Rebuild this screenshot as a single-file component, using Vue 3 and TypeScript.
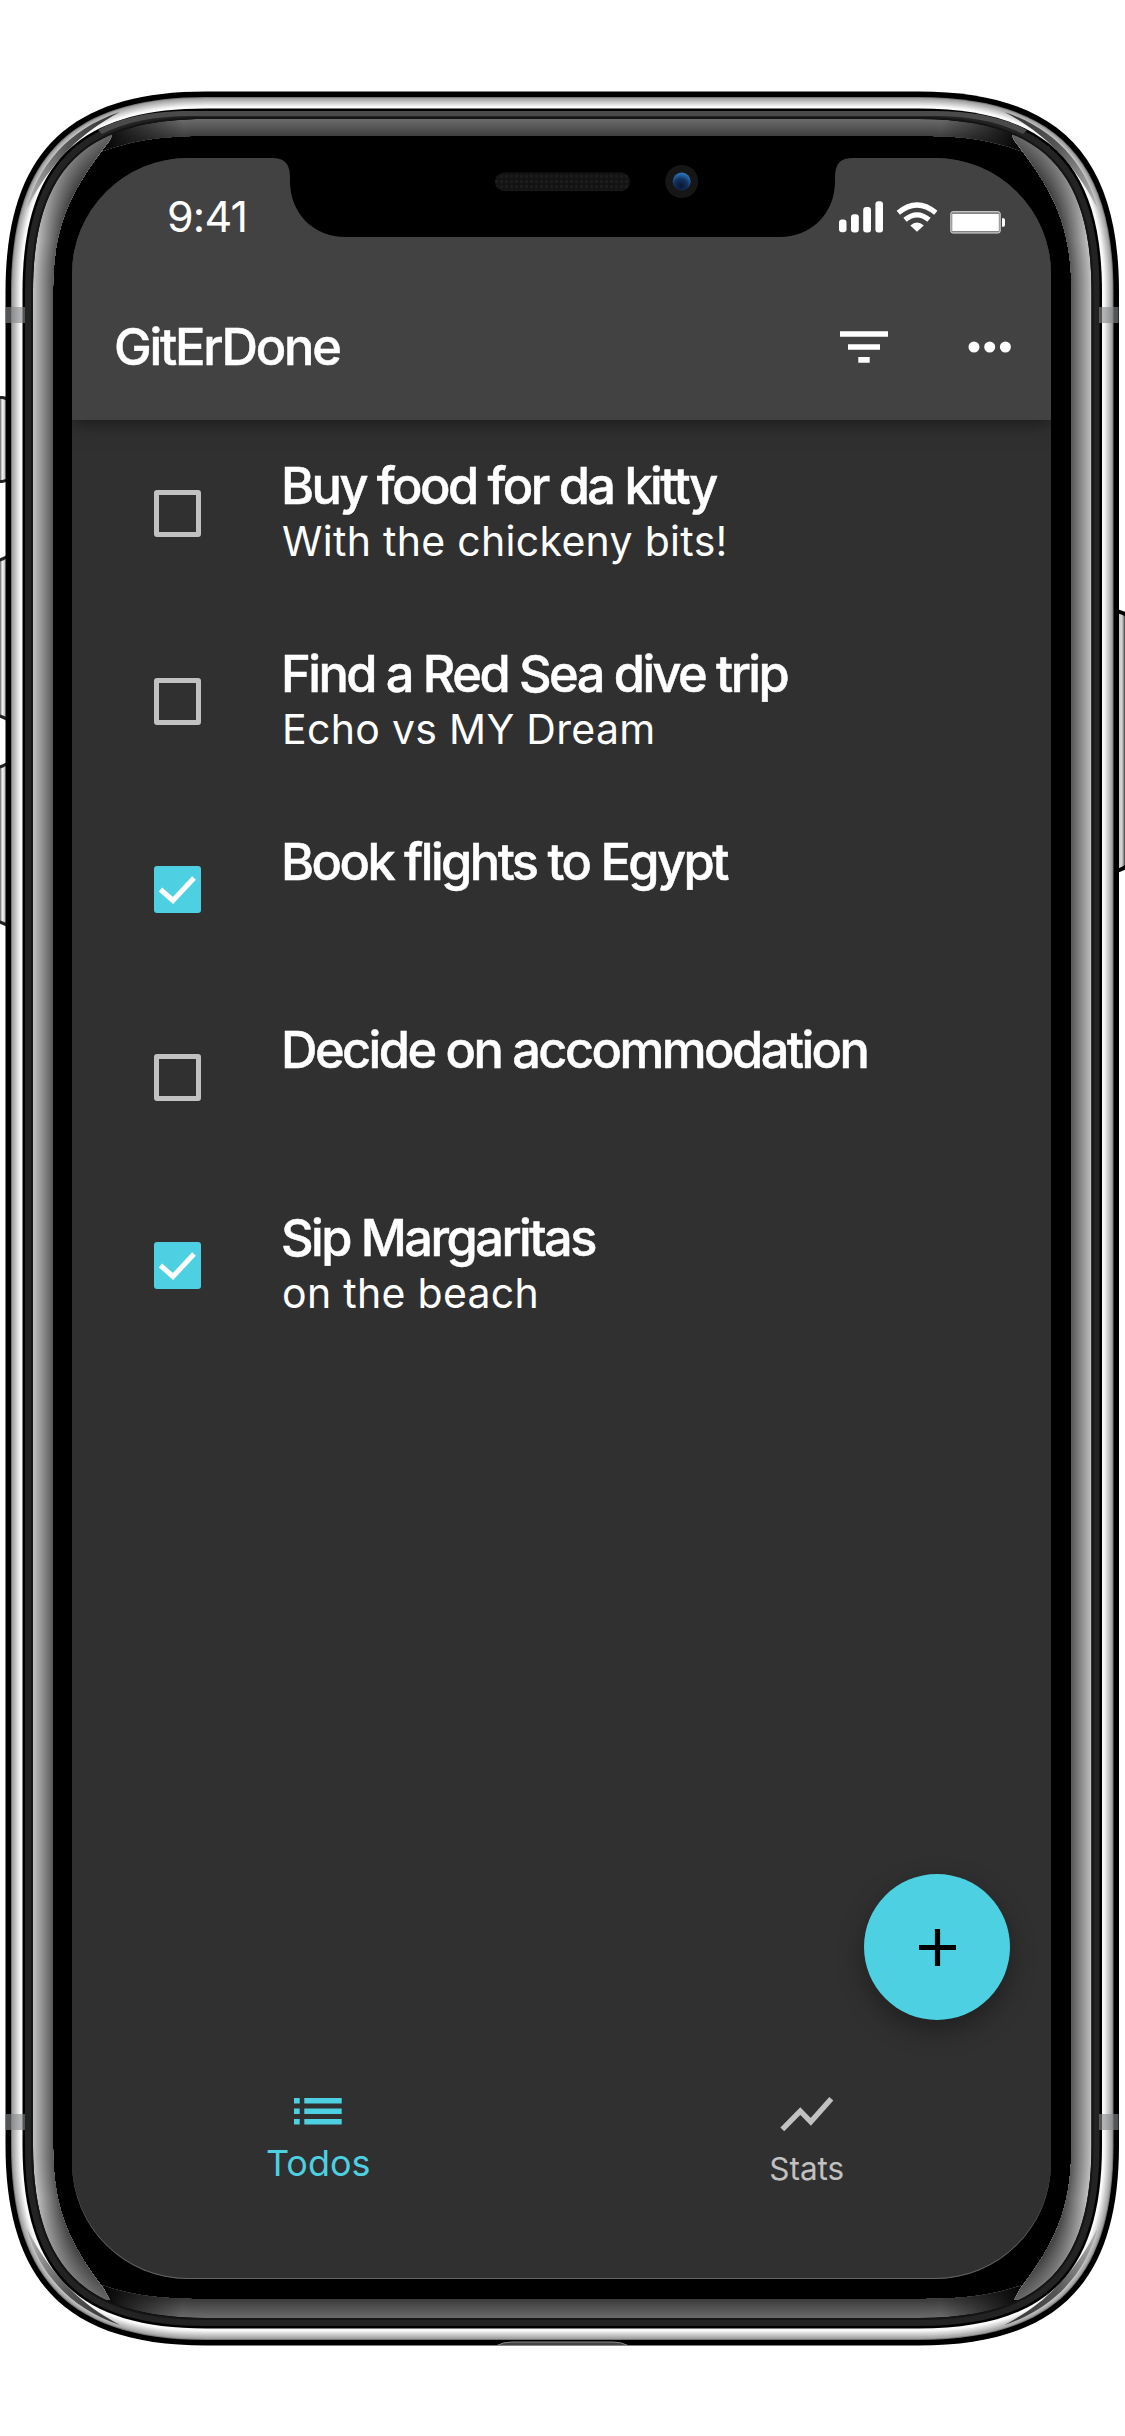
<script setup lang="ts">
interface Todo {
  title: string
  note?: string
  done: boolean
}

const todos: Todo[] = [
  { title: 'Buy food for da kitty', note: 'With the chickeny bits!', done: false },
  { title: 'Find a Red Sea dive trip', note: 'Echo vs MY Dream', done: false },
  { title: 'Book flights to Egypt', done: true },
  { title: 'Decide on accommodation', done: false },
  { title: 'Sip Margaritas', note: 'on the beach', done: true },
]

// Rounded rectangle with continuous (squircle-like) corners.
function shell(l: number, t: number, r: number, b: number, len: number, c: number): string {
  return (
    `M${l} ${t + len}C${l} ${t + c} ${l + c} ${t} ${l + len} ${t}` +
    `H${r - len}C${r - c} ${t} ${r} ${t + c} ${r} ${t + len}` +
    `V${b - len}C${r} ${b - c} ${r - c} ${b} ${r - len} ${b}` +
    `H${l + len}C${l + c} ${b} ${l} ${b - c} ${l} ${b - len}Z`
  )
}

// Outline of the body moved inwards by i pixels.
const inset = (i: number) => shell(6 + i, 92 + i, 1118.5 - i, 2345 - i, 200 - i, 62 - i * 0.42)

const grey = (v: number) => {
  const n = Math.round(v)
  return `rgb(${n},${n},${n})`
}

const steel = Array.from({ length: 12 }, (_, i) => ({
  d: inset(5 + i),
  fill: grey(i === 0 ? 120 : Math.min(250, 150 + i * 11)),
}))

const glass = Array.from({ length: 21 }, (_, i) => ({
  d: inset(27 + i),
  fill: grey(190 - i * 5.2),
}))

const glassEnd = Array.from({ length: 19 }, (_, i) => ({
  d: inset(27 + i),
  fill: grey(106 - i * 2.6),
}))
</script>

<template>
  <main class="stage">
    <svg class="frame" width="1125" height="2436" viewBox="0 0 1125 2436" aria-hidden="true">
      <defs>
        <linearGradient id="key" x1="0" x2="8" y1="0" y2="0" gradientUnits="userSpaceOnUse">
          <stop offset="0" stop-color="#666" />
          <stop offset=".3" stop-color="#f4f4f4" />
          <stop offset=".6" stop-color="#c4c4c4" />
          <stop offset="1" stop-color="#999" />
        </linearGradient>
        <linearGradient id="power" x1="1115" x2="1125" y1="0" y2="0" gradientUnits="userSpaceOnUse">
          <stop offset="0" stop-color="#555" />
          <stop offset=".3" stop-color="#c8c8c8" />
          <stop offset=".7" stop-color="#d4d4d4" />
          <stop offset="1" stop-color="#444" />
        </linearGradient>
        <linearGradient id="fade" x1="100" x2="1024" y1="0" y2="0" gradientUnits="userSpaceOnUse">
          <stop offset="0" stop-color="#000" />
          <stop offset=".09" stop-color="#000" stop-opacity="0" />
          <stop offset=".91" stop-color="#000" stop-opacity="0" />
          <stop offset="1" stop-color="#000" />
        </linearGradient>
        <linearGradient id="tip" x1="0" x2="0" y1="130" y2="240" gradientUnits="userSpaceOnUse">
          <stop offset="0" stop-color="#000" stop-opacity=".5" />
          <stop offset="1" stop-color="#000" stop-opacity="0" />
        </linearGradient>
        <linearGradient id="shade" x1="26" x2="120" y1="190" y2="112" gradientUnits="userSpaceOnUse">
          <stop offset="0" stop-color="#aaa" />
          <stop offset=".5" stop-color="#555" />
          <stop offset="1" stop-color="#333" />
        </linearGradient>
        <clipPath id="pane"><path :d="inset(27)" /></clipPath>
        <clipPath id="sides">
          <path d="M0 300V135L110 132C114 136 110 140 104 148C72 190 53 225 53 290V2147C53 2212 72 2247 104 2289L110 2300L0 2300Z" />
          <path d="M1125 300V135L1014 132C1010 136 1014 140 1020 148C1052 190 1071.500 225 1071.500 290V2147C1071.500 2212 1052 2247 1020 2289L1014 2300L1125 2300Z" />
        </clipPath>
        <clipPath id="ends">
          <path d="M90 100H1034V156C1000 142 970 136 925 136H200C155 136 125 142 90 156Z" />
          <path d="M90 2340H1034V2281C1000 2294 970 2299 925 2299H200C155 2299 125 2294 90 2281Z" />
        </clipPath>
      </defs>

      <g fill="url(#key)" stroke="#222" stroke-width="3">
        <path d="M-4 397.500H2Q8 398 10 403V476Q8 481 2 481.500H-4Z" />
        <path d="M-4 560.500Q4 560 10 554V722Q4 716 -4 715.500Z" />
        <path d="M-4 767.500Q4 767 10 761V928Q4 922 -4 921.500Z" />
      </g>
      <path d="M1114 611Q1121 611 1130 617V864Q1121 871 1114 871Z" fill="url(#power)" stroke="#000" stroke-width="4" />

      <path :d="inset(-0.5)" fill="#000" />
      <path v-for="(s, i) in steel" :key="`s${i}`" :d="s.d" :fill="s.fill" />
      <g fill="url(#shade)">
        <path id="swoosh" d="M27 208C38 168 66 130 120 112C82 132 52 160 27 208Z" />
        <use href="#swoosh" transform="translate(1124.500 0) scale(-1 1)" />
        <use href="#swoosh" transform="translate(0 2437) scale(1 -1)" />
        <use href="#swoosh" transform="translate(1124.500 2437) scale(-1 -1)" />
      </g>
      <path :d="inset(16.500)" fill="#000" />
      <path :d="inset(19)" fill="#232323" />
      <path d="M190 111H935C975 111 1005 118 1027 130L1023 134C1000 122 970 116 935 116H190C155 116 125 122 102 134L98 130C120 118 150 111 190 111Z" fill="#4a4a4a" />
      <path :d="inset(25)" fill="#151515" />
      <path :d="inset(27)" fill="#000" />
      <g clip-path="url(#pane)">
        <g clip-path="url(#ends)">
          <path v-for="(s, i) in glassEnd" :key="`e${i}`" :d="s.d" :fill="s.fill" />
          <rect x="60" y="110" width="1004" height="50" fill="url(#fade)" />
          <rect x="60" y="2278" width="1004" height="39" fill="url(#fade)" />
        </g>
        <g clip-path="url(#sides)">
          <path v-for="(s, i) in glass" :key="`g${i}`" :d="s.d" :fill="s.fill" />
          <rect id="dim" x="30" y="119" width="1065" height="121" fill="url(#tip)" />
          <use href="#dim" transform="translate(0 2437) scale(1 -1)" />
        </g>
      </g>

      <g fill="#85888b" fill-opacity=".62">
        <rect x="6" y="307" width="19" height="16" />
        <rect x="1099" y="307" width="19.500" height="16" />
        <rect x="6" y="2114" width="19" height="16" />
        <rect x="1099" y="2114" width="19.500" height="16" />
      </g>
      <path d="M497 2345.500Q503 2342 512 2342H613Q621 2342 628 2345.500Z" fill="#444" stroke="#888" stroke-width="1" />
    </svg>

    <div class="screen">
      <header class="top">
        <div class="status">
          <span class="clock">9:41</span>
          <svg class="signals" width="168" height="36" viewBox="838 200 168 36" fill="#fff">
            <rect x="839" y="219.500" width="7.500" height="12.800" rx="3" />
            <rect x="851" y="214.200" width="7.800" height="18.400" rx="3" />
            <rect x="863.200" y="207" width="7.800" height="25.600" rx="3" />
            <rect x="875.400" y="201.200" width="7.600" height="31.400" rx="3" />
            <g fill="none" stroke="#fff" stroke-width="5.200">
              <path d="M898.300 212.800Q917 197.200 935.800 212.800" />
              <path d="M905 219.800Q917 210 929 219.800" />
            </g>
            <path d="M910.300 225.600Q917 219.500 923.800 225.600L917 231.800Z" />
            <rect x="950.800" y="211.700" width="49.400" height="21.300" rx="2" fill="#858585" stroke="#ddd" stroke-width="1" />
            <rect x="952.300" y="214" width="46.500" height="17" />
            <path d="M1002 218.300H1003.500Q1005 218.300 1005 220V225Q1005 226.800 1003.500 226.800H1002Z" />
          </svg>
        </div>
        <div class="bar">
          <h1>GitErDone</h1>
          <svg width="48" height="33" viewBox="0 0 48 33" fill="#fff" role="img" aria-label="Filter">
            <path d="M0 .300H48V5.800H0ZM8 13.200H40V18.800H8ZM18.300 26H29.700V31.800H18.300Z" />
          </svg>
          <svg class="more" width="44" height="12" viewBox="0 0 44 12" fill="#fff" role="img" aria-label="More">
            <circle cx="6" cy="6" r="5.500" /><circle cx="21.700" cy="6" r="5.500" /><circle cx="37.400" cy="6" r="5.500" />
          </svg>
        </div>
      </header>

      <ul class="list">
        <li v-for="todo in todos" :key="todo.title" class="row">
          <span class="box" :class="{ on: todo.done }">
            <svg v-if="todo.done" width="47" height="47" viewBox="0 0 47 47">
              <path d="M6.500 23.500L19 34.500L40 12" fill="none" stroke="#fff" stroke-width="5" />
            </svg>
          </span>
          <div class="copy">
            <h2>{{ todo.title }}</h2>
            <p v-if="todo.note">{{ todo.note }}</p>
          </div>
        </li>
      </ul>

      <button class="fab" aria-label="Add">
        <svg width="37" height="37" viewBox="0 0 37 37"><path d="M18.500 0V37M0 18.500H37" stroke="#000" stroke-width="5.200" /></svg>
      </button>

      <nav class="tabs">
        <a class="tab active">
          <svg width="48" height="27" viewBox="0 0 48 27" fill="currentColor">
            <path d="M0 0H5.700V5.500H0ZM10.300 0H47.700V5.500H10.300ZM0 10.500H5.700V16H0ZM10.300 10.500H47.700V16H10.300ZM0 21H5.700V26.500H0ZM10.300 21H47.700V26.500H10.300Z" />
          </svg>
          <span>Todos</span>
        </a>
        <a class="tab">
          <svg width="54" height="36" viewBox="780.500 2095.500 54 36" fill="none" stroke="currentColor" stroke-width="5.400">
            <path d="M782.800 2128.800L800.800 2110.700L811.300 2121.300L831.800 2098.200" />
          </svg>
          <span>Stats</span>
        </a>
      </nav>
    </div>

    <svg class="notch" width="565" height="80" viewBox="271 157 565 80" aria-hidden="true">
      <defs>
        <pattern id="mesh" width="5" height="5" patternUnits="userSpaceOnUse">
          <rect width="5" height="5" fill="#131313" /><rect width="3" height="3" fill="#1c1c1c" />
        </pattern>
        <radialGradient id="lens" cx=".45" cy=".75" r=".75">
          <stop offset="0" stop-color="#0b1733" /><stop offset=".5" stop-color="#12305c" /><stop offset="1" stop-color="#2f7cc0" />
        </radialGradient>
      </defs>
      <path d="M271 157V158C284 158 290 163 290 177V181C290 214 314 237 346 237H779C811 237 835 214 835 181V177C835 163 841 158 853 158V157Z" />
      <rect x="495" y="172.500" width="135" height="18.500" rx="9" fill="url(#mesh)" />
      <circle cx="681.700" cy="181.500" r="16.500" fill="#161616" />
      <circle cx="681.700" cy="181.500" r="9" fill="url(#lens)" />
    </svg>
  </main>
</template>

<style>
body {
  background: #fff;
}
</style>

<style scoped>
.stage {
  position: relative;
  box-sizing: border-box;
  width: 1125px;
  height: 2436px;
  padding: 158px 74px 157px 72px;
  overflow: hidden;
  font-family: Inter, 'Liberation Sans', sans-serif;
}
.frame {
  position: absolute;
  left: 0;
  top: 0;
}
.notch {
  position: absolute;
  left: 271px;
  top: 157px;
  overflow: visible;
}
.screen {
  position: relative;
  display: flex;
  flex-direction: column;
  width: 979px;
  height: 2121px;
  background: #303030;
  border-radius: 116px;
  overflow: hidden;
  color: #fff;
  box-shadow: inset 0 -1px #666;
}
.top {
  height: 262px;
  flex: none;
  background: #424242;
  box-shadow: 0 3px 18px rgba(0, 0, 0, 0.5);
}
.status {
  display: flex;
  height: 108px;
  align-items: flex-start;
  justify-content: space-between;
  padding: 32px 45px 0 95px;
  box-sizing: border-box;
}
.signals {
  margin-top: 10px;
}
.clock {
  font-size: 43px;
  line-height: 52px;
  letter-spacing: -0.8px;
}
.bar {
  display: flex;
  align-items: center;
  height: 162px;
  padding: 0 39px 0 42px;
}
h1,
h2,
p,
ul {
  margin: 0;
  padding: 0;
}
h1,
h2 {
  font-size: 50.5px;
  font-weight: 500;
  line-height: 60px;
  white-space: nowrap;
  -webkit-text-stroke: 0.5px #fff;
}
h1 {
  flex: 1;
  letter-spacing: -2.2px;
}
.more {
  margin-left: 80px;
}
.list {
  list-style: none;
}
.row {
  display: flex;
  height: 188px;
}
.box {
  box-sizing: border-box;
  width: 47px;
  height: 47px;
  margin: 70px 80px 0 82px;
  border: 5px solid #c1c1c1;
  border-radius: 3px;
}
.box.on {
  border: 0;
  background: #4dd0e1;
}
.copy {
  padding-top: 36px;
}
h2 {
  letter-spacing: -2.55px;
}
.copy p {
  padding-left: 1px;
  font-size: 41px;
  line-height: 50px;
  letter-spacing: 0.3px;
  white-space: nowrap;
}
.fab {
  position: absolute;
  right: 41px;
  top: 1716px;
  display: flex;
  align-items: center;
  justify-content: center;
  width: 146px;
  height: 146px;
  padding: 0;
  border: 0;
  border-radius: 50%;
  background: #4dd0e1;
  box-shadow: 0 10px 26px rgba(0, 0, 0, 0.35);
}
.tabs {
  display: flex;
  height: 186px;
  margin-top: auto;
  padding-left: 2px;
}
.tab {
  flex: 1;
  display: flex;
  flex-direction: column;
  align-items: center;
  color: #c1c1c1;
  font-size: 31.5px;
  line-height: 38px;
  padding-top: 3px;
}
.tab span {
  margin-top: 18px;
}
.tab.active {
  color: #4dd0e1;
  font-size: 36px;
  line-height: 44px;
  padding-top: 5px;
}
.tab.active span {
  margin-top: 16px;
}
</style>
